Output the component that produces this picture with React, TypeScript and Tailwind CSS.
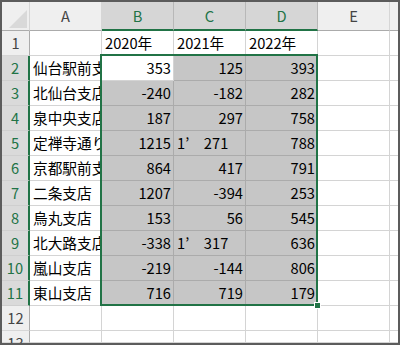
const cols = ['A', 'B', 'C', 'D', 'E'];

type Row = { name?: string; vals?: string[] };

const rows: Row[] = [
  { vals: ['2020年', '2021年', '2022年'] },
  { name: '仙台駅前支店', vals: ['353', '125', '393'] },
  { name: '北仙台支店', vals: ['-240', '-182', '282'] },
  { name: '泉中央支店', vals: ['187', '297', '758'] },
  { name: '定禅寺通り支店', vals: ['1215', '1’\u3000271', '788'] },
  { name: '京都駅前支店', vals: ['864', '417', '791'] },
  { name: '二条支店', vals: ['1207', '-394', '253'] },
  { name: '烏丸支店', vals: ['153', '56', '545'] },
  { name: '北大路支店', vals: ['-338', '1’\u3000317', '636'] },
  { name: '嵐山支店', vals: ['-219', '-144', '806'] },
  { name: '東山支店', vals: ['716', '719', '179'] },
  {},
  {},
];

function ColHeader({ label }: { label: string }) {
  const sel = label === 'B' || label === 'C' || label === 'D';
  return (
    <div
      className={
        sel
          ? 'w-[72px] h-full flex items-center justify-center bg-[#d6d6d6] border-r border-[#b8b8b8] border-b-2 border-b-[#217346] text-[#217346]'
          : 'w-[72px] h-full flex items-center justify-center bg-[#efefef] border-r border-[#d6d6d6] border-b border-b-[#ababab] text-[#444]'
      }
    >
      {label}
    </div>
  );
}

function SheetRow({ n, row }: { n: number; row: Row }) {
  const sel = n >= 2 && n <= 11;
  const vals = row.vals ?? ['', '', ''];
  return (
    <div className={n === 13 ? 'flex h-[12px] shrink-0' : 'flex h-[25px] shrink-0'}>
      <div
        className={
          sel
            ? 'w-[28px] flex justify-center pt-[2px] bg-[#dadada] border-r-2 border-[#217346] border-b border-b-[#cfcfcf] text-[#217346]'
            : 'w-[28px] flex justify-center pt-[2px] bg-[#efefef] border-r border-[#ababab] border-b border-b-[#d6d6d6] text-[#444]'
        }
      >
        {n}
      </div>
      <div className="w-[72px] pl-[3px] pt-[2px] border-r border-b border-[#d4d4d4] overflow-hidden whitespace-nowrap">
        {row.name}
      </div>
      {vals.map((v, i) => {
        const gray = sel && !(n === 2 && i === 0);
        const isText = n === 1 || v.includes('’');
        return (
          <div
            key={i}
            className={[
              'w-[72px] pt-[2px] border-r border-b overflow-hidden whitespace-pre',
              isText ? 'pl-[3px] text-left' : 'pr-[2px] text-right',
              gray ? 'bg-[#c6c6c6] border-[#ababab]' : 'bg-white border-[#d4d4d4]',
            ].join(' ')}
          >
            {v}
          </div>
        );
      })}
      <div className="w-[72px] border-r border-b border-[#d4d4d4]" />
      <div className="flex-1 border-b border-[#d4d4d4]" />
    </div>
  );
}

export default function App() {
  return (
    <div
      className="relative w-[400px] h-[345px] overflow-hidden border-2 border-[#5c5c5c] bg-white text-[14.67px] leading-[20px] text-black"
      style={{ fontFamily: '"Noto Sans CJK JP", "Noto Sans", sans-serif' }}
    >
      <div className="flex flex-col">
        {/* column headers */}
        <div className="flex h-[29px] shrink-0">
          <div className="w-[28px] h-full bg-[#efefef] border-r border-[#d6d6d6] border-b border-b-[#ababab] relative">
            <svg className="absolute right-[2px] bottom-[2px]" width="18" height="18" viewBox="0 0 18 18">
              <polygon points="18,0 18,18 0,18" fill="#d9d9d9" />
            </svg>
          </div>
          {cols.map((c) => (
            <ColHeader key={c} label={c} />
          ))}
          <div className="flex-1 h-full bg-[#efefef] border-b border-b-[#ababab]" />
        </div>
        {rows.map((r, i) => (
          <SheetRow key={i} n={i + 1} row={r} />
        ))}
      </div>

      {/* selection outline B2:D11 */}
      <div className="absolute left-[98px] top-[52px] w-[218px] h-[252px] border-2 border-[#217346] pointer-events-none" />
      <div className="absolute left-[312px] top-[300px] w-[7px] h-[7px] bg-[#217346] border border-white" />
    </div>
  );
}
